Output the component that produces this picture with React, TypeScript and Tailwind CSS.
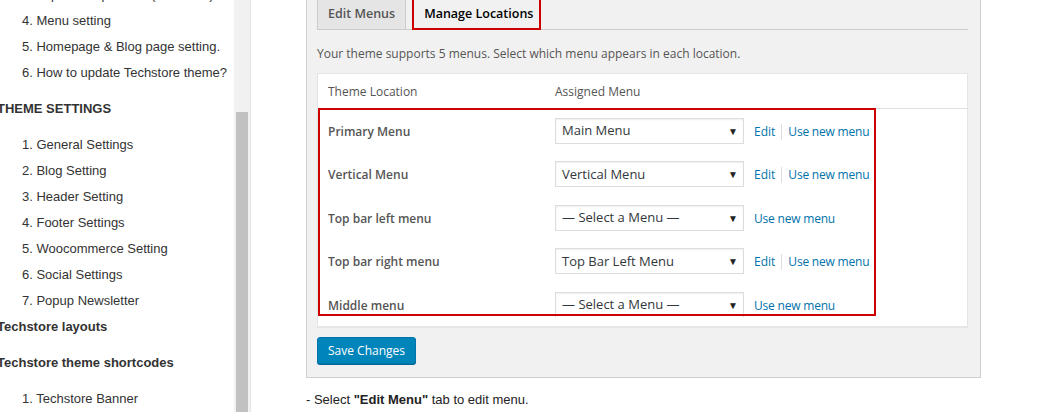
import React from "react";

const sideFont = { fontFamily: '"Liberation Sans", Arial, sans-serif' };
const wpFont = { fontFamily: '"Open Sans", "Noto Sans", sans-serif' };

function SubItem({ children }: { children: React.ReactNode }) {
  return <div className="h-[26px] leading-[26px] pl-[22px] whitespace-nowrap">{children}</div>;
}

function Heading({ children, mt = true }: { children: React.ReactNode; mt?: boolean }) {
  return (
    <div className={`h-[26px] leading-[26px] font-bold whitespace-nowrap -ml-[3px] ${mt ? "mt-[10px]" : ""}`}>
      {children}
    </div>
  );
}

type Row = { label: string; value: string; edit: boolean; last?: boolean };

const rows: Row[] = [
  { label: "Primary Menu", value: "Main Menu", edit: true },
  { label: "Vertical Menu", value: "Vertical Menu", edit: true },
  { label: "Top bar left menu", value: "— Select a Menu —", edit: false },
  { label: "Top bar right menu", value: "Top Bar Left Menu", edit: true },
  { label: "Middle menu", value: "— Select a Menu —", edit: false, last: true },
];

function LocationRow({ r }: { r: Row }) {
  return (
    <div className={r.last ? "h-[34px] overflow-hidden" : ""}>
      <div className="flex h-[43.5px] items-center">
        <div className="w-[237px] pl-[10px] text-[12px] font-semibold text-[#555] pt-[2px]">{r.label}</div>
        <div className="w-[189px] h-[26px] border border-[#ddd] bg-white flex items-center justify-between pl-[6px] pr-[5px] text-[13px] text-[#32373c] shadow-[inset_0_1px_2px_rgba(0,0,0,0.07)] shrink-0">
          <span>{r.value}</span>
          <span className="text-[10px] text-[#222] leading-none">▼</span>
        </div>
        <div className="flex items-center ml-[10px] text-[12px] text-[#0073aa] pt-[2px]">
          {r.edit && (
            <>
              <span>Edit</span>
              <span className="w-px h-[16px] bg-[#ddd] mx-[6px]" />
            </>
          )}
          <span className="tracking-[-0.2px]">Use new menu</span>
        </div>
      </div>
    </div>
  );
}

export default function App() {
  return (
    <div className="w-[1041px] h-[412px] overflow-hidden flex bg-white">
      {/* Sidebar */}
      <div className="w-[234px] h-full overflow-hidden text-[13px] text-[#333] shrink-0" style={sideFont}>
        <div className="-mt-[18px]">
          <SubItem>3. Import sample data (One click)</SubItem>
          <SubItem>4. Menu setting</SubItem>
          <SubItem>5. Homepage &amp; Blog page setting.</SubItem>
          <SubItem>6. How to update Techstore theme?</SubItem>
          <Heading>THEME SETTINGS</Heading>
          <div className="mt-[10px]">
            <SubItem>1. General Settings</SubItem>
            <SubItem>2. Blog Setting</SubItem>
            <SubItem>3. Header Setting</SubItem>
            <SubItem>4. Footer Settings</SubItem>
            <SubItem>5. Woocommerce Setting</SubItem>
            <SubItem>6. Social Settings</SubItem>
            <SubItem>7. Popup Newsletter</SubItem>
          </div>
          <Heading mt={false}>Techstore layouts</Heading>
          <Heading>Techstore theme shortcodes</Heading>
          <div className="mt-[10px]">
            <SubItem>1. Techstore Banner</SubItem>
          </div>
        </div>
      </div>

      {/* Scrollbar */}
      <div className="w-[17px] h-full bg-[#f1f1f1] border-r border-[#e3e3e3] shrink-0 flex flex-col">
        <div className="h-[112px]" />
        <div className="mx-[2px] flex-1 bg-[#c1c1c1]" />
      </div>

      {/* Main */}
      <div className="flex-1 pl-[55px]">
        <div className="w-[675px] bg-[#f1f1f1] border-x border-b border-[#cfcfcf] pl-[10px] pr-[12px] pb-[13px]" style={wpFont}>
          {/* Tabs */}
          <div className="h-[30px] border-b border-[#ccc] flex items-end">
            <div className="h-[30px] -mb-px pl-[10px] pr-[10px] bg-[#e5e5e5] border border-t-0 border-[#ccc] text-[12.5px] font-semibold text-[#555] flex items-center">
              Edit Menus
            </div>
            <div className="h-[30px] -mb-px ml-[6px] pl-[10px] pr-[6px] bg-[#f1f1f1] border-2 border-t-0 border-[#cc0000] text-[12.5px] font-semibold text-black flex items-center">
              Manage Locations
            </div>
          </div>
          <div className="mt-[15px] h-[18px] leading-[18px] text-[12px] text-[#555]">
            Your theme supports 5 menus. Select which menu appears in each location.
          </div>

          {/* Table */}
          <div className="relative mt-[10px] bg-white border border-[#e5e5e5] shadow-[0_1px_1px_rgba(0,0,0,0.04)]">
            <div className="h-[35px] flex items-center border-b border-[#e1e1e1] text-[12px] text-[#555] pt-[2px]">
              <div className="w-[237px] pl-[10px]">Theme Location</div>
              <div>Assigned Menu</div>
            </div>
            {rows.map((r) => (
              <LocationRow key={r.label} r={r} />
            ))}
            <div className="h-[9px]" />
            <div className="absolute left-0 top-[34px] w-[558px] h-[208px] border-2 border-[#cc0000] pointer-events-none" />
          </div>

          <button className="mt-[10px] h-[27px] px-[10px] rounded-[3px] bg-[#0085ba] border border-[#0073aa] text-white text-[12px] shadow-[0_1px_0_#006799]">
            Save Changes
          </button>
        </div>
        <div className="mt-[12px] h-[20px] leading-[20px] text-[13px] text-[#222]" style={sideFont}>
          - Select <b>"Edit Menu"</b> tab to edit menu.
        </div>
      </div>
    </div>
  );
}
